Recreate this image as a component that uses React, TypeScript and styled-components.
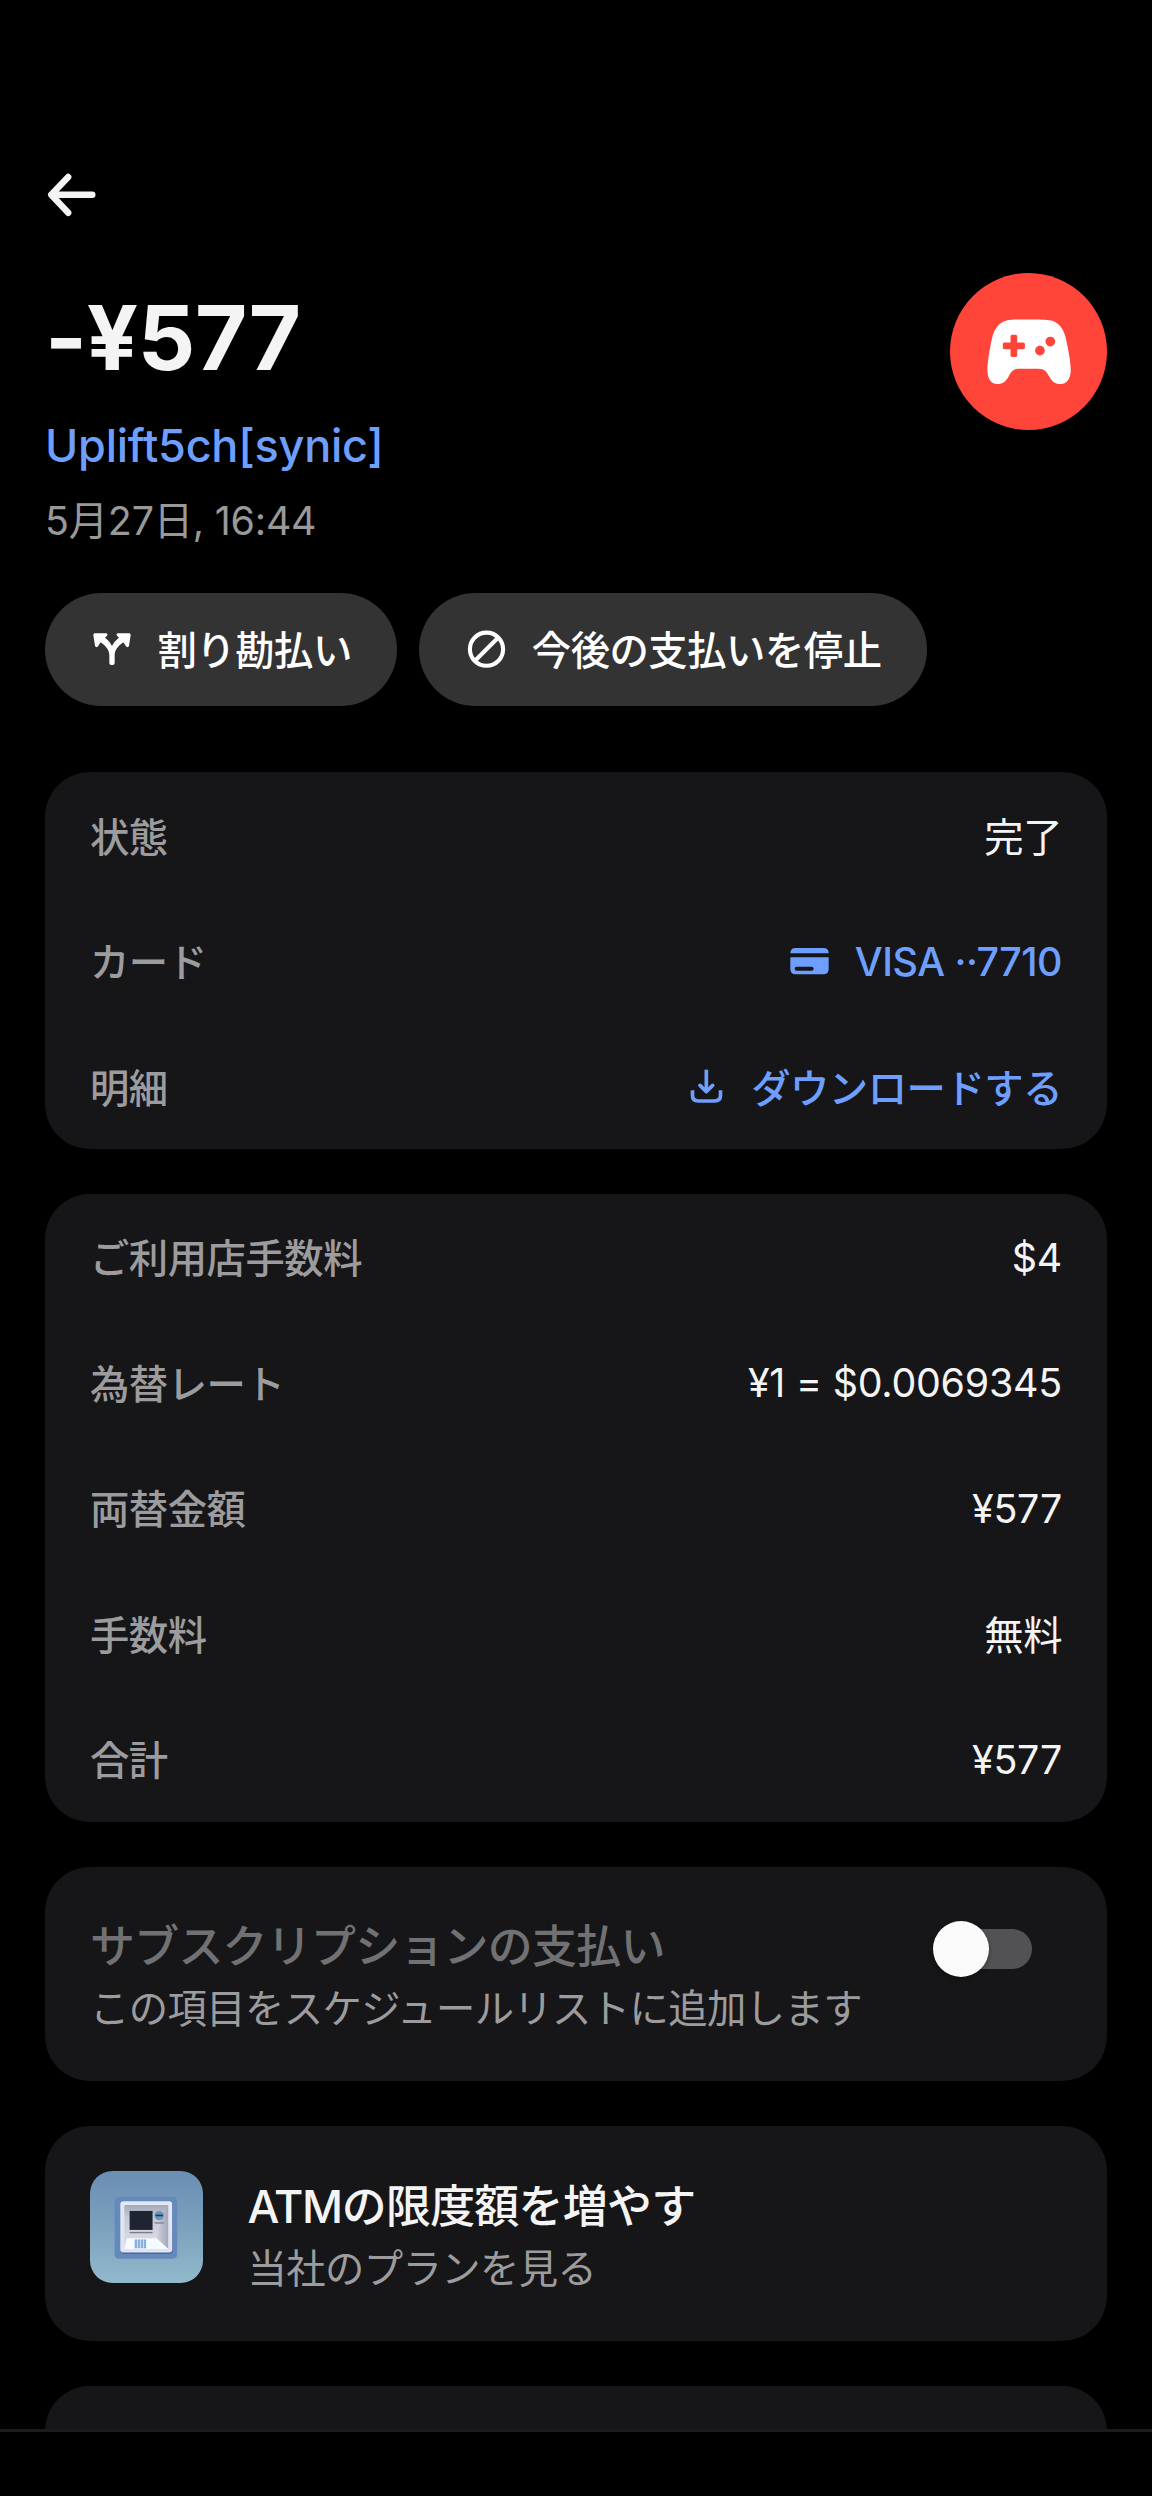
import React from "react";
import styled, { createGlobalStyle } from "styled-components";

const GlobalStyle = createGlobalStyle`
  *, *::before, *::after { box-sizing: border-box; }
  body {
    margin: 0;
    background: #000;
    color: #f4f4f4;
    font-family: Inter, "Noto Sans CJK JP", sans-serif;
    letter-spacing: -0.5px;
    -webkit-font-smoothing: antialiased;
  }
`;

const Screen = styled.div`
  display: flex;
  flex-direction: column;
  width: 1152px;
  height: 2496px;
  overflow: hidden;
  background: #000;
`;

const Scroller = styled.main`
  flex: 1;
  min-height: 0;
  overflow: hidden;
  padding: 160.5px 45px 0;
`;

const BottomBar = styled.footer`
  flex: none;
  height: 67px;
  border-top: 3px solid #1b1b1d;
  background: #000;
`;

const BackButton = styled.button`
  display: block;
  width: 67.5px;
  height: 67.5px;
  padding: 0;
  border: 0;
  background: none;
  color: #f4f4f4;
`;

const Header = styled.header`
  display: flex;
  justify-content: space-between;
  align-items: flex-start;
  margin-top: 44.6px;
`;

const Summary = styled.div`
  padding-top: 15.7px;
`;

const Amount = styled.h1`
  margin: 0;
  font-size: 90px;
  line-height: 100px;
  font-weight: 700;
  letter-spacing: -0.3px;
`;

const Merchant = styled.a`
  display: block;
  margin-top: 27.6px;
  font-size: 45px;
  line-height: 60px;
  font-weight: 500;
  letter-spacing: -0.25px;
  color: #6e9fff;
`;

const Timestamp = styled.div`
  margin-top: 20px;
  font-size: 39.375px;
  line-height: 50px;
  letter-spacing: -0.22px;
  color: #99999a;
`;

const Avatar = styled.div`
  flex: none;
  width: 157.5px;
  height: 157.5px;
  border-radius: 50%;
  background: #ff453a;
`;

const Actions = styled.div`
  display: flex;
  gap: 22.5px;
  margin-top: 47.3px;
`;

const Pill = styled.button`
  display: flex;
  align-items: center;
  gap: 22.5px;
  height: 112.5px;
  padding: 0 45px;
  border: 0;
  border-radius: 57px;
  background: #333333;
  color: #fff;
  font: inherit;
  font-size: 39.375px;
  line-height: 56.25px;
  font-weight: 500;
  letter-spacing: -0.5px;
  white-space: nowrap;
`;

const PillLabel = styled.span`
  padding-top: 4px;
`;

const Icon = styled.svg<{ $size?: number }>`
  display: block;
  flex: none;
  width: ${(p) => p.$size ?? 45}px;
  height: ${(p) => p.$size ?? 45}px;
`;

const Cards = styled.div`
  display: flex;
  flex-direction: column;
  gap: 45px;
  margin-top: 66.7px;
`;

const Card = styled.section`
  flex: none;
  border-radius: 45px;
  background: #161618;
`;

const Row = styled.div`
  display: flex;
  align-items: center;
  justify-content: space-between;
  height: 125.55px;
  padding: 0 45px;
  font-size: 39.375px;
  line-height: 56.25px;
`;

const Label = styled.span`
  padding-top: 5px;
  font-weight: 500;
  color: #9c9c9e;
`;

const Value = styled.span<{ $link?: boolean }>`
  display: flex;
  align-items: center;
  gap: 22.5px;
  font-weight: ${(p) => (p.$link ? 500 : 400)};
  color: ${(p) => (p.$link ? "#6e9fff" : "#f4f4f4")};
`;

const ValueText = styled.span<{ $latin: boolean; $tight: boolean }>`
  padding-top: ${(p) => (p.$latin ? 2 : 5)}px;
  letter-spacing: ${(p) => (p.$tight ? -0.5 : -0.22)}px;
`;

const MediaCard = styled(Card)`
  display: flex;
  align-items: center;
  gap: 45px;
  height: 214.6px;
  padding: 0 45px;
`;

const Texts = styled.div`
  flex: 1;
  padding-top: 6.5px;
`;

const CardTitle = styled.div<{ $muted?: boolean }>`
  font-size: 45px;
  line-height: 64px;
  font-weight: 500;
  letter-spacing: -0.8px;
  color: ${(p) => (p.$muted ? "#717173" : "#f4f4f4")};
`;

const Acronym = styled.span`
  letter-spacing: -1.4px;
`;

const CardNote = styled.div`
  font-size: 39.375px;
  line-height: 60px;
  letter-spacing: -0.62px;
  color: #9c9c9e;
`;

const Switch = styled.button`
  display: flex;
  align-items: center;
  width: 95.6px;
  height: 39.4px;
  margin: 0 30px 50px 0;
  padding: 0;
  border: 0;
  border-radius: 20px;
  background: #525254;
`;

const Knob = styled.span`
  flex: none;
  width: 56.25px;
  height: 56.25px;
  margin-left: -3.5px;
  border-radius: 50%;
  background: #fafafa;
  box-shadow: 0 2px 4px rgba(0, 0, 0, 0.35);
`;

const Thumb = styled.div`
  flex: none;
  width: 112.5px;
  height: 112.5px;
  margin-bottom: 12.8px;
  border-radius: 22.5px;
  overflow: hidden;
  background: linear-gradient(#6b8eb3, #7ba1bd 50%, #92b9cc);
`;

const NextCard = styled(Card)`
  height: 214.6px;
`;

const BackIcon = () => (
  <Icon $size={67.5} viewBox="0 0 67.5 67.5" fill="none" stroke="currentColor" strokeWidth="6.4" strokeLinecap="round" strokeLinejoin="round">
    <path d="M47.3 33.8H6.4M23.2 16L6.2 33.8L23.2 51.8" />
  </Icon>
);

const GamepadIcon = () => (
  <Icon $size={157.5} viewBox="0 0 471 471">
    <path
      fill="#fff"
      d="M236 139C264 139 290 139 303 142C327 148 341 170 346 194C353 225 361 265 361 290C361 318 348 332 331 332C312 332 304 322 297 310C289 295 284 286 264 286H208C188 286 183 295 175 310C168 322 160 332 141 332C124 332 112 318 112 290C112 265 119 225 126 194C131 170 145 148 169 142C182 139 208 139 236 139Z"
    />
    <g fill="#ff453a">
      <rect x="181" y="185" width="20" height="66" rx="5" />
      <rect x="158" y="208" width="66" height="20" rx="5" />
      <circle cx="300" cy="205" r="14.5" />
      <circle cx="269" cy="232" r="14.5" />
    </g>
  </Icon>
);

const SplitIcon = () => (
  <Icon viewBox="0 0 135 135" fill="currentColor">
    <path d="M14 19H48Q55 20 51 26L45 32C55 40 62 48 66 57C70 48 77 40 87 32L81 26Q77 20 84 19H118Q122 19 122 24L117 56Q115 63 109 59L100 46C84 57 74 70 74 84V107Q74 114 66 114Q58 114 58 107V84C58 70 48 57 32 46L23 59Q17 63 15 56L10 24Q10 19 14 19Z" />
  </Icon>
);

const BanIcon = () => (
  <Icon viewBox="0 0 45 45" fill="none" stroke="currentColor" strokeWidth="4.1">
    <circle cx="22.5" cy="22.2" r="16.6" />
    <path d="M11 33.7L34 10.7" />
  </Icon>
);

const CardIcon = () => (
  <Icon viewBox="0 0 135 135" fill="currentColor">
    <path d="M10 46Q10 30 26 30H109Q125 30 125 46Z" />
    <path
      fillRule="evenodd"
      d="M10 58H125V93Q125 109 109 109H26Q10 109 10 93ZM29 86Q23 86 23 92T29 98H74Q80 98 80 92T74 86Z"
    />
  </Icon>
);

const DownloadIcon = () => (
  <Icon viewBox="0 0 135 135" fill="none" stroke="currentColor" strokeWidth="11">
    <path d="M67 17V82" />
    <path d="M48 64L67 83L86 64" strokeLinecap="round" strokeLinejoin="round" />
    <path d="M25.500 79V94Q25.500 111 42 111H92Q109.500 111 109.500 94V79" />
  </Icon>
);

const AtmArt = () => (
  <Icon $size={112.5} viewBox="0 0 338 338">
    <defs>
      <linearGradient id="frame" x1="0" y1="0" x2="0" y2="1">
        <stop offset="0" stopColor="#e3e8f8" />
        <stop offset="1" stopColor="#dfe3f4" />
      </linearGradient>
      <linearGradient id="inner" x1="0" y1="0" x2="0" y2="1">
        <stop offset="0" stopColor="#a5a9b8" />
        <stop offset="0.3" stopColor="#c9ccd7" />
        <stop offset="1" stopColor="#dcdfea" />
      </linearGradient>
      <linearGradient id="side" x1="0" y1="0" x2="1" y2="0">
        <stop offset="0" stopColor="#cfd2dd" />
        <stop offset="1" stopColor="#a4a8b8" />
      </linearGradient>
    </defs>
    <rect x="74" y="77" width="188" height="187" rx="13" fill="#6489bb" />
    <rect x="92" y="95" width="156" height="154" rx="10" fill="#4b6796" />
    <rect x="91" y="91" width="156" height="154" rx="10" fill="url(#frame)" />
    <rect x="103" y="102" width="132" height="132" rx="3" fill="url(#inner)" />
    <path d="M222 114L235 102V234L200 202Z" fill="url(#side)" />
    <path d="M103 234L111 202H200L235 234Z" fill="#f5faff" />
    <rect x="119" y="120" width="69" height="57" fill="#1f2433" />
    <rect x="119" y="183" width="69" height="4" fill="#777c8c" />
    <circle cx="208" cy="134" r="14" fill="#6795c4" />
    <rect x="197" y="131" width="22" height="5" fill="#273954" />
    <rect x="194" y="154" width="28" height="4" fill="#7b8192" />
    <path d="M138 206V232M147 206V232M156 206V232M165 206V232" stroke="#79a6d8" strokeWidth="7" />
    <path d="M133 212H170M133 219H170M133 226H170" stroke="#c9def5" strokeWidth="1.5" />
  </Icon>
);

type Item = { label: string; value: string; icon?: React.ReactNode };

const status: Item[] = [
  { label: "状態", value: "完了" },
  { label: "カード", value: "VISA ··7710", icon: <CardIcon /> },
  { label: "明細", value: "ダウンロードする", icon: <DownloadIcon /> },
];

const breakdown: Item[] = [
  { label: "ご利用店手数料", value: "$4" },
  { label: "為替レート", value: "¥1 = $0.0069345" },
  { label: "両替金額", value: "¥577" },
  { label: "手数料", value: "無料" },
  { label: "合計", value: "¥577" },
];

const isLatin = (text: string) => !/[\u3040-\u9fff]/.test(text);

const DetailCard = ({ items }: { items: Item[] }) => (
  <Card>
    {items.map((item) => (
      <Row key={item.label}>
        <Label>{item.label}</Label>
        <Value $link={Boolean(item.icon)}>
          {item.icon}
          <ValueText $latin={isLatin(item.value)} $tight={Boolean(item.icon) || !isLatin(item.value)}>
            {item.value}
          </ValueText>
        </Value>
      </Row>
    ))}
  </Card>
);

export default function App() {
  return (
    <Screen lang="ja">
      <GlobalStyle />
      <Scroller>
        <BackButton aria-label="戻る">
          <BackIcon />
        </BackButton>
        <Header>
          <Summary>
            <Amount>-¥577</Amount>
            <Merchant>Uplift5ch[synic]</Merchant>
            <Timestamp>5月27日, 16:44</Timestamp>
          </Summary>
          <Avatar>
            <GamepadIcon />
          </Avatar>
        </Header>
        <Actions>
          <Pill>
            <SplitIcon />
            <PillLabel>割り勘払い</PillLabel>
          </Pill>
          <Pill>
            <BanIcon />
            <PillLabel>今後の支払いを停止</PillLabel>
          </Pill>
        </Actions>
        <Cards>
          <DetailCard items={status} />
          <DetailCard items={breakdown} />
          <MediaCard>
            <Texts>
              <CardTitle $muted>サブスクリプションの支払い</CardTitle>
              <CardNote>この項目をスケジュールリストに追加します</CardNote>
            </Texts>
            <Switch role="switch" aria-checked={false}>
              <Knob />
            </Switch>
          </MediaCard>
          <MediaCard>
            <Thumb>
              <AtmArt />
            </Thumb>
            <Texts>
              <CardTitle>
                <Acronym>ATM</Acronym>の限度額を増やす
              </CardTitle>
              <CardNote>当社のプランを見る</CardNote>
            </Texts>
          </MediaCard>
          <NextCard />
        </Cards>
      </Scroller>
      <BottomBar />
    </Screen>
  );
}
